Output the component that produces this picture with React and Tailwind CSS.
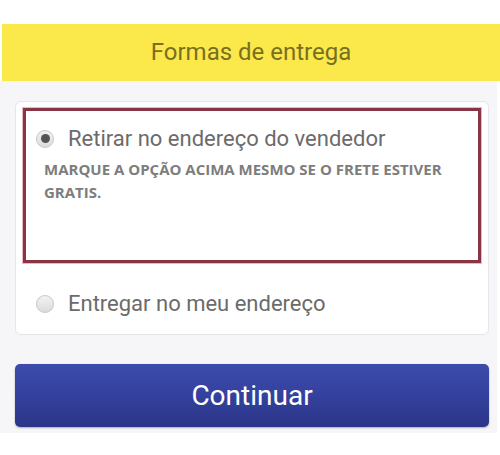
const Radio = ({ checked }) => (
  <span className="w-[18px] h-[18px] rounded-full border border-[#c8c8c8] bg-gradient-to-b from-[#f2f2f2] to-[#dcdcdc] flex items-center justify-center shrink-0">
    {checked && <span className="w-[9px] h-[9px] rounded-full bg-[#555]" />}
  </span>
);

export default function App() {
  return (
    <div className="w-[500px] h-[455px] bg-white font-['Roboto',sans-serif]">
      <div className="h-6" />
      <div className="ml-[2px] h-[57px] bg-[#fbe94c] flex items-center justify-center">
        <h1 className="text-[24px] text-[#7a6f1f] -mt-[2px]">Formas de entrega</h1>
      </div>
      <div className="bg-[#f6f6f8] h-[352px] w-[497px] pt-5 px-[15px]">
        <div className="bg-white border border-[#e6e6ea] rounded-md w-[474px] h-[234px] pt-[6px] px-[7px]">
          <div className="h-[155px] border-[3px] border-[#8a3546] shadow-[0_0_0_1px_#e9b9c2] pt-[11px] pl-[10px] pr-3">
            <label className="flex items-center gap-[14px]">
              <Radio checked />
              <span className="text-[22px] text-[#6b6b6b]">Retirar no endereço do vendedor</span>
            </label>
            <p className="mt-[3px] ml-[8px] font-['Open_Sans',sans-serif] font-bold text-[15px] leading-[23px] text-[#7d7d7d] pr-4">
              MARQUE A OPÇÃO ACIMA MESMO SE O FRETE ESTIVER GRATIS.
            </p>
          </div>
          <label className="flex items-center gap-[14px] pl-[13px] mt-[24px]">
            <Radio />
            <span className="text-[22px] text-[#6b6b6b]">Entregar no meu endereço</span>
          </label>
        </div>
        <button className="mt-[29px] w-[474px] h-[63px] rounded-[5px] bg-gradient-to-b from-[#3d4bab] via-[#34419d] to-[#2b3688] text-white text-[28px] shadow-[0_1px_2px_rgba(0,0,0,0.3)]">
          Continuar
        </button>
      </div>
    </div>
  );
}
